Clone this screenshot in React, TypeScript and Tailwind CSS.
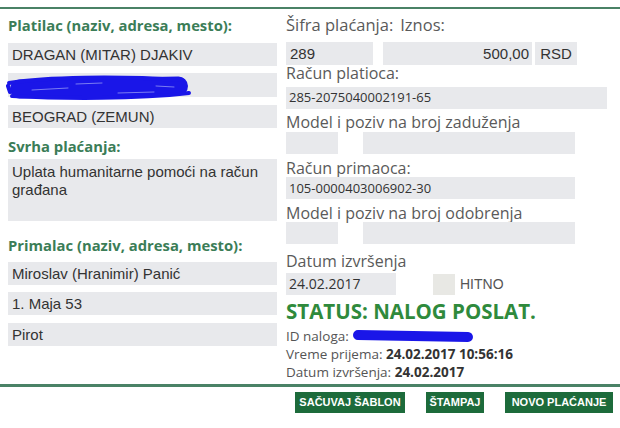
import React from "react";

const arial = { fontFamily: '"Liberation Sans", Arial, sans-serif' };
const open = { fontFamily: '"Open Sans", "Noto Sans", sans-serif' };

function LBox({ children, h = "h-[23px]", mt }: { children?: React.ReactNode; h?: string; mt: string }) {
  return (
    <div className={`${mt} ${h} bg-[#e8e9ec] pl-[4px] text-[15px] leading-[23px] text-[#333] whitespace-nowrap`} style={arial}>
      {children}
    </div>
  );
}

function GLabel({ children, mt }: { children: React.ReactNode; mt: string }) {
  return (
    <div className={`${mt} h-[18px] text-[14.8px] font-bold leading-[18px] text-[#3b7d57] whitespace-nowrap`} style={open}>
      {children}
    </div>
  );
}

function RLabel({ children, mt }: { children: React.ReactNode; mt: string }) {
  return (
    <div className={`${mt} h-[18px] text-[16px] leading-[18px] text-[#5a5a5a] whitespace-nowrap`} style={open}>
      {children}
    </div>
  );
}

function Scribble() {
  return (
    <div className="relative w-[186px] h-[27px]">
      <div className="absolute left-[4px] top-[4px] h-[19px] w-[178px] rounded-[10px] bg-[#1a16e8] -rotate-1" />
      <svg className="absolute left-0 top-0 block w-[186px] h-[27px]" width="186" height="27" viewBox="0 0 186 27">
        <g fill="none" stroke="#1a16e8" strokeLinecap="round" strokeWidth="4">
          <path d="M3 9 C40 3, 110 2, 176 6" />
          <path d="M6 22 C60 25, 130 25, 183 19" />
          <path d="M2 12 L4 18" />
        </g>
        <g fill="none" stroke="#7a7cf2" strokeLinecap="round" strokeWidth="1">
          <path d="M26 16 L62 14" />
          <path d="M112 19 L148 18" />
          <path d="M150 12 L168 13" />
          <path d="M70 10 L96 9" />
        </g>
      </svg>
    </div>
  );
}

function Btn({ w, children }: { w: string; children: React.ReactNode }) {
  return (
    <div
      className={`${w} h-[21px] bg-[#1d6b3b] text-white text-[11px] font-bold leading-[21px] text-center whitespace-nowrap`}
      style={arial}
    >
      {children}
    </div>
  );
}

export default function App() {
  return (
    <div className="w-[620px] h-[428px] bg-white overflow-hidden">
      <div className="pt-[7px]">
        <div className="h-[2px] bg-[#4a8266]" />
      </div>
      <div className="flex h-[375px]">
        {/* left column */}
        <div className="ml-[8px] w-[269px] flex flex-col">
          <GLabel mt="mt-[7px]">Platilac (naziv, adresa, mesto):</GLabel>
          <LBox mt="mt-[9px]">DRAGAN (MITAR) DJAKIV</LBox>
          <div className="relative mt-[7px] h-[24px] bg-[#e8e9ec]">
            <div className="absolute left-[-2px] top-[1px]">
              <Scribble />
            </div>
          </div>
          <LBox mt="mt-[8px]">BEOGRAD (ZEMUN)</LBox>
          <GLabel mt="mt-[9px]">Svrha plaćanja:</GLabel>
          <div className="mt-[4px] h-[62px] bg-[#e8e9ec] pl-[4px] pt-[4px] text-[15px] leading-[18px] text-[#333]" style={arial}>
            Uplata humanitarne pomoći na račun
            <br />
            građana
          </div>
          <GLabel mt="mt-[15px]">Primalac (naziv, adresa, mesto):</GLabel>
          <LBox mt="mt-[8px]">Miroslav (Hranimir) Panić</LBox>
          <LBox mt="mt-[7px]">1. Maja 53</LBox>
          <LBox mt="mt-[8px]">Pirot</LBox>
        </div>
        {/* right column */}
        <div className="ml-[9px] flex-1 flex flex-col">
          <div className="mt-[6px] h-[20px] text-[16.5px] leading-[20px] text-[#5a5a5a] whitespace-nowrap" style={open}>
            Šifra plaćanja:<span className="ml-[7px]">Iznos:</span>
          </div>
          <div className="mt-[7px] flex h-[23px] text-[15px] leading-[23px] text-[#333]" style={arial}>
            <div className="w-[87px] bg-[#e8e9ec] pl-[4px]">289</div>
            <div className="ml-[10px] w-[149px] bg-[#e8e9ec] pr-[3px] text-right">500,00</div>
            <div className="ml-[3px] w-[42px] bg-[#e8e9ec] text-center">RSD</div>
          </div>
          <RLabel mt="mt-[-1px]">Račun platioca:</RLabel>
          <div className="mt-[5px] h-[22px] w-[321px] bg-[#e8e9ec] pl-[3px] text-[13px] leading-[20px] text-[#333]" style={open}>
            285-2075040002191-65
          </div>
          <RLabel mt="mt-[4px]">Model i poziv na broj zaduženja</RLabel>
          <div className="mt-[1px] flex h-[22px]">
            <div className="w-[52px] bg-[#e8e9ec]" />
            <div className="ml-[25px] w-[212px] bg-[#e8e9ec]" />
          </div>
          <RLabel mt="mt-[5px]">Račun primaoca:</RLabel>
          <div className="h-[22px] w-[289px] bg-[#e8e9ec] pl-[3px] text-[13px] leading-[22px] text-[#333]" style={open}>
            105-0000403006902-30
          </div>
          <RLabel mt="mt-[5px]">Model i poziv na broj odobrenja</RLabel>
          <div className="flex h-[22px]">
            <div className="w-[52px] bg-[#e8e9ec]" />
            <div className="ml-[25px] w-[212px] bg-[#e8e9ec]" />
          </div>
          <RLabel mt="mt-[8px]">Datum izvršenja</RLabel>
          <div className="mt-[3px] flex h-[22px] items-center">
            <div className="h-[22px] w-[110px] bg-[#e8e9ec] pl-[3px] text-[14px] leading-[22px] text-[#333]" style={open}>
              24.02.2017
            </div>
            <div className="ml-[37px] h-[21px] w-[22px] bg-[#e8e8e4]" />
            <div className="ml-[5px] text-[14px] leading-[22px] text-[#555]" style={arial}>
              HITNO
            </div>
          </div>
          <div className="mt-[4px] h-[24px] text-[20.5px] font-bold leading-[24px] text-[#2f8a3c] whitespace-nowrap" style={open}>
            STATUS: NALOG POSLAT.
          </div>
          <div className="mt-[5px] flex h-[16px] items-center text-[13.5px] leading-[16px] text-[#555]" style={open}>
            ID naloga:
            <span className="relative ml-[3px] inline-block h-[14px] w-[124px]">
              <span className="absolute left-[1px] top-[2px] h-[10px] w-[120px] rounded-[5px] bg-[#1a16e8] rotate-1" />
            </span>
          </div>
          <div className="mt-[2px] h-[16px] text-[13.5px] leading-[16px] text-[#555] whitespace-nowrap" style={open}>
            Vreme prijema: <span className="font-bold text-[#333]">24.02.2017 10:56:16</span>
          </div>
          <div className="mt-[2px] h-[16px] text-[13.5px] leading-[16px] text-[#555] whitespace-nowrap" style={open}>
            Datum izvršenja: <span className="font-bold text-[#333]">24.02.2017</span>
          </div>
        </div>
      </div>
      <div className="h-[3px] bg-[#4a8266]" />
      <div className="mt-[5px] flex justify-end gap-[21px] pr-[7px]">
        <Btn w="w-[110px]">SAČUVAJ ŠABLON</Btn>
        <Btn w="w-[58px]">ŠTAMPAJ</Btn>
        <Btn w="w-[108px]">NOVO PLAĆANJE</Btn>
      </div>
    </div>
  );
}
